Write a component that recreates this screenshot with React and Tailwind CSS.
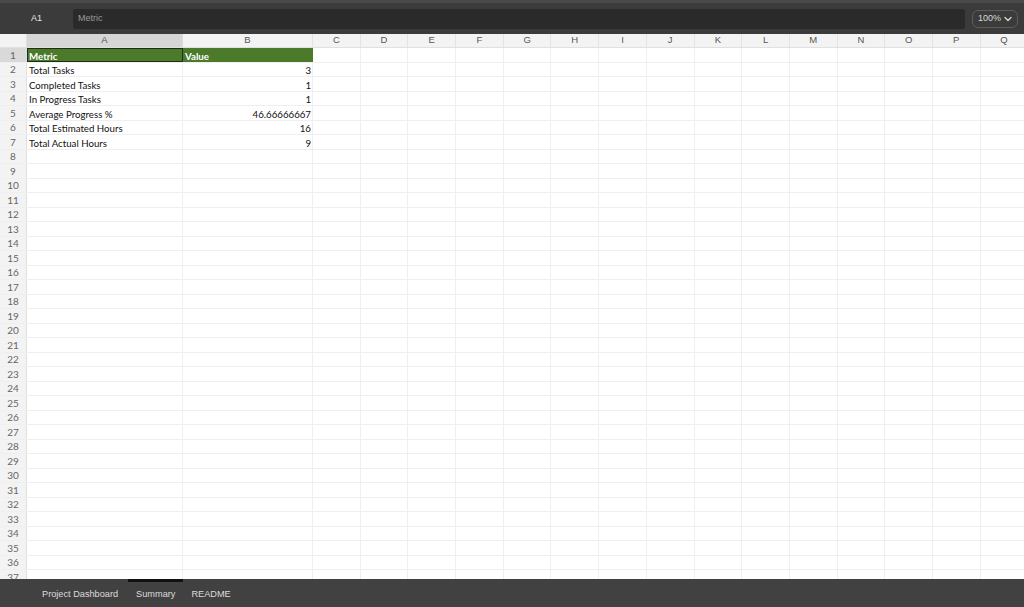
import React from 'react';

const cols = ['C', 'D', 'E', 'F', 'G', 'H', 'I', 'J', 'K', 'L', 'M', 'N', 'O', 'P', 'Q'];

const data = [
    ['Total Tasks', '3'],
    ['Completed Tasks', '1'],
    ['In Progress Tasks', '1'],
    ['Average Progress %', '46.66666667'],
    ['Total Estimated Hours', '16'],
    ['Total Actual Hours', '9'],
];

const rowCount = 37;

const App = () => {
    const rows = Array.from({ length: rowCount }, (_, i) => i + 1);

    return (
        <div className="w-[1024px] h-[607px] flex flex-col overflow-hidden bg-white" style={{ fontFamily: '"Liberation Sans", Arial, sans-serif' }}>
            {/* formula bar */}
            <div className="h-[34px] shrink-0 bg-[#3b3b3b] border-t-[3px] border-[#4a4a4a] flex items-center">
                <div className="w-[73px] pl-[31px] text-[9px] text-[#e6e6e6]">A1</div>
                <div className="flex-1 h-[20px] bg-[#2a2a2a] rounded-[3px] flex items-center px-[5px] text-[9px] text-[#9a9a9a]">Metric</div>
                <div className="ml-[7px] mr-[6px] w-[46px] h-[18px] border border-[#5c5c5c] rounded-[6px] flex items-center justify-center gap-[3px] text-[9px] text-[#d8d8d8]">
                    100%
                    <svg width="8" height="6" viewBox="0 0 8 6" fill="none" stroke="#d8d8d8" strokeWidth="1.3" strokeLinecap="round" strokeLinejoin="round">
                        <path d="M1 1.5 L4 4.5 L7 1.5" />
                    </svg>
                </div>
            </div>

            {/* sheet */}
            <div className="flex-1 overflow-hidden">
                {/* column headers */}
                <div className="flex h-[14px] bg-[#f3f3f3] border-b border-[#e0e0e0] text-[9.5px] text-[#555]">
                    <div className="w-[27px] shrink-0 border-r border-[#e0e0e0]"></div>
                    <div className="w-[156px] shrink-0 bg-[#d6d6d6] border-r border-[#dcdcdc] flex items-center justify-center">A</div>
                    <div className="w-[130px] shrink-0 border-r border-[#e3e3e3] flex items-center justify-center">B</div>
                    {cols.map(c => (
                        <div key={c} className="w-[47.7px] shrink-0 border-r border-[#e3e3e3] flex items-center justify-center">{c}</div>
                    ))}
                </div>

                {rows.map(r => {
                    const isHead = r === 1;
                    const d = data[r - 2];
                    return (
                        <div key={r} className="flex h-[14.5px] border-b border-[#efefef] text-[9.7px] leading-[12px]" style={{ fontFamily: 'Lato, "Liberation Sans", sans-serif' }}>
                            <div className={`w-[27px] shrink-0 border-r border-[#e0e0e0] flex items-center justify-center text-[10px] text-[#666] ${isHead ? 'bg-[#d9d9d9]' : 'bg-[#f3f3f3]'}`}>{r}</div>
                            {isHead ? (
                                <>
                                    <div className="w-[156px] shrink-0 bg-[#4a7a2a] outline outline-1 outline-[#1f2e14] -outline-offset-1 flex items-end pl-[2px] font-bold text-white">Metric</div>
                                    <div className="w-[130px] shrink-0 bg-[#4a7a2a] flex items-end pl-[2px] font-bold text-white">Value</div>
                                </>
                            ) : (
                                <>
                                    <div className="w-[156px] shrink-0 border-r border-[#efefef] flex items-end pl-[2px] text-[#111]">{d ? d[0] : ''}</div>
                                    <div className="w-[130px] shrink-0 border-r border-[#efefef] flex items-end justify-end pr-[1px] text-[#111]">{d ? d[1] : ''}</div>
                                </>
                            )}
                            {cols.map(c => (
                                <div key={c} className="w-[47.7px] shrink-0 border-r border-[#efefef]"></div>
                            ))}
                        </div>
                    );
                })}
            </div>

            {/* sheet tabs */}
            <div className="h-[28px] shrink-0 bg-[#414141] flex items-stretch pl-[32px] text-[9.2px] text-[#dcdcdc]">
                <div className="px-[10px] flex items-center border-t-[3px] border-transparent">Project Dashboard</div>
                <div className="px-[8px] flex items-center border-t-[3px] border-[#111]">Summary</div>
                <div className="px-[8px] flex items-center border-t-[3px] border-transparent">README</div>
            </div>
        </div>
    );
};

export default App;
